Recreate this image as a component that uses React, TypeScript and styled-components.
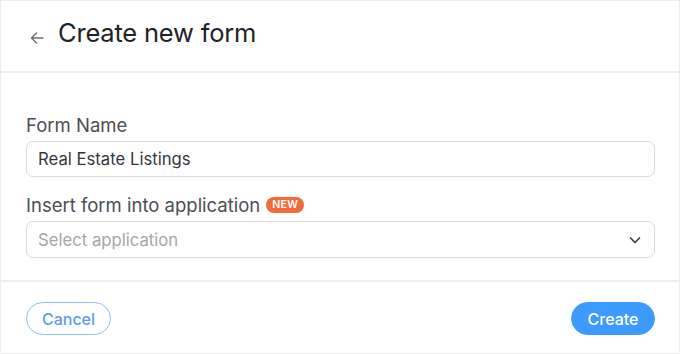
import React from "react";
import styled, { createGlobalStyle } from "styled-components";

const GlobalStyle = createGlobalStyle`
  html, body {
    margin: 0;
    padding: 0;
    background: #ffffff;
    font-family: Inter, "Noto Sans", sans-serif;
    -webkit-font-smoothing: antialiased;
  }
  *, *:before, *:after {
    box-sizing: border-box;
  }
`;

function BackArrow() {
  return (
    <svg width="16" height="16" viewBox="0 0 16 16" fill="none">
      <path
        d="M14 8H2.5M7.5 3L2.5 8l5 5"
        stroke="#6b6f75"
        strokeWidth="1.4"
        strokeLinecap="round"
        strokeLinejoin="round"
      />
    </svg>
  );
}

function Chevron() {
  return (
    <svg width="14" height="14" viewBox="0 0 14 14" fill="none">
      <path
        d="M2.5 5l4.5 4.5L11.5 5"
        stroke="#3c4047"
        strokeWidth="1.7"
        strokeLinecap="round"
        strokeLinejoin="round"
      />
    </svg>
  );
}

export default function App() {
  return (
    <Frame>
      <GlobalStyle />
      <Header>
        <BackButton aria-label="Back">
          <BackArrow />
        </BackButton>
        <Title>Create new form</Title>
      </Header>
      <Body>
        <Field>
          <Label>Form Name</Label>
          <TextInput defaultValue="Real Estate Listings" />
        </Field>
        <Field>
          <Label>
            Insert form into application
            <Badge>NEW</Badge>
          </Label>
          <Select>
            <Placeholder>Select application</Placeholder>
            <Chevron />
          </Select>
        </Field>
      </Body>
      <Footer>
        <Button $variant="outline">Cancel</Button>
        <Button $variant="primary">Create</Button>
      </Footer>
    </Frame>
  );
}

const Frame = styled.div`
  width: 680px;
  height: 354px;
  border: 1px solid #ececec;
  border-bottom: none;
  display: flex;
  flex-direction: column;
  background: #fff;
`;

const Header = styled.header`
  height: 72px;
  display: flex;
  align-items: center;
  gap: 13px;
  padding: 0 26px 7px 28px;
  border-bottom: 2px solid #eeeeee;
`;

const BackButton = styled.button`
  border: none;
  background: none;
  padding: 0;
  display: flex;
  margin-top: 10px;
`;

const Title = styled.h1`
  margin: 0;
  font-size: 25.5px;
  font-weight: 400;
  color: #1f2329;
  letter-spacing: -0.2px;
`;

const Body = styled.main`
  flex: 1;
  padding: 40px 24px 0 25px;
  display: flex;
  flex-direction: column;
  gap: 16px;
  border-bottom: 2px solid #eeeeee;
`;

const Field = styled.div`
  display: flex;
  flex-direction: column;
  gap: 4px;
`;

const Label = styled.label`
  display: flex;
  align-items: center;
  gap: 6px;
  font-size: 18.5px;
  color: #4a4e55;
  height: 24px;
`;

const Badge = styled.span`
  background: #f26b3d;
  color: #fff;
  font-size: 10.5px;
  font-weight: 600;
  padding: 0 6px;
  height: 16px;
  line-height: 16px;
  border-radius: 8px;
  letter-spacing: 0.3px;
`;

const TextInput = styled.input`
  height: 36px;
  border: 1px solid #dcdcdc;
  border-radius: 7px;
  padding: 0 11px;
  font-family: inherit;
  font-size: 16.7px;
  color: #33373d;
  outline: none;
`;

const Select = styled.div`
  height: 37px;
  border: 1px solid #dcdcdc;
  border-radius: 7px;
  padding: 0 12px 0 11px;
  display: flex;
  align-items: center;
  justify-content: space-between;
`;

const Placeholder = styled.span`
  font-size: 16.7px;
  color: #a3a6ab;
`;

const Footer = styled.footer`
  height: 72px;
  display: flex;
  align-items: center;
  justify-content: space-between;
  padding: 2px 24px 0 25px;
  border-bottom: 1px solid #ececec;
`;

const Button = styled.button<{ $variant: "outline" | "primary" }>`
  height: 33px;
  width: ${({ $variant }) => ($variant === "primary" ? "84px" : "85px")};
  padding: 0;
  border-radius: 17px;
  font-family: inherit;
  font-size: 16px;
  font-weight: 500;
  cursor: pointer;
  border: 1.5px solid
    ${({ $variant }) => ($variant === "primary" ? "#3d9bff" : "#8cbcff")};
  background: ${({ $variant }) =>
    $variant === "primary" ? "#3d9bff" : "#ffffff"};
  color: ${({ $variant }) => ($variant === "primary" ? "#ffffff" : "#5a9df5")};
`;
